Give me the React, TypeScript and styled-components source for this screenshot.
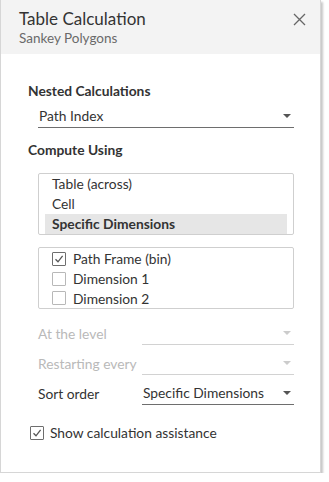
import React from "react";
import styled, { createGlobalStyle } from "styled-components";

const GlobalStyle = createGlobalStyle`
  html, body {
    margin: 0;
    padding: 0;
    background: #ffffff;
  }
  body {
    font-family: Lato, "Open Sans", "Liberation Sans", sans-serif;
    color: #333333;
  }
`;

const Panel = styled.div`
  width: 321px;
  height: 473px;
  box-sizing: border-box;
  background: #ffffff;
  border: 1px solid #d6d6d6;
  border-top: none;
  box-shadow: 2px 2px 2px rgba(0, 0, 0, 0.22);
  display: flex;
  flex-direction: column;
`;

const Header = styled.div`
  height: 54px;
  box-sizing: border-box;
  background: #f3f3f3;
  padding: 8px 14px 0 18px;
  display: flex;
  justify-content: space-between;
  align-items: flex-start;
`;

const Title = styled.div`
  font-size: 17px;
  line-height: 22px;
  color: #333333;
`;

const Subtitle = styled.div`
  font-size: 13.5px;
  line-height: 16px;
  color: #6a6a6a;
`;

const CloseButton = styled.button`
  border: none;
  background: none;
  padding: 0;
  margin-top: 5px;
  width: 14px;
  height: 14px;
  cursor: pointer;
  color: #666666;
`;

const Body = styled.div`
  padding: 28px 26px 0 27px;
  display: flex;
  flex-direction: column;
`;

const SectionTitle = styled.div`
  font-size: 13.8px;
  font-weight: bold;
  line-height: 18px;
  color: #333333;
`;

const Indented = styled.div`
  margin-left: 10px;
`;

const SelectBox = styled.div<{ $disabled?: boolean }>`
  position: relative;
  height: 23px;
  border-bottom: 1px solid ${(p) => (p.$disabled ? "#d2d2d2" : "#6e6e6e")};
  display: flex;
  align-items: center;
  padding-left: 1px;
  font-size: 13.8px;
  color: #333333;
  &::after {
    content: "";
    position: absolute;
    right: 3px;
    top: 10px;
    border-left: 4px solid transparent;
    border-right: 4px solid transparent;
    border-top: 4px solid ${(p) => (p.$disabled ? "#cccccc" : "#555555")};
  }
`;

const ListBox = styled.div<{ $inset?: boolean }>`
  height: 62px;
  box-sizing: border-box;
  border: 1px solid #cfcfcf;
  border-radius: 2px;
  padding: ${(p) => (p.$inset ? "0 6px 0 6px" : "1px 0 0 0")};
  display: flex;
  flex-direction: column;
`;

const ListItem = styled.div<{ $selected?: boolean }>`
  height: 20px;
  line-height: 20px;
  font-size: 13.8px;
  padding-left: 7px;
  font-weight: ${(p) => (p.$selected ? "bold" : "normal")};
  background: ${(p) => (p.$selected ? "#e6e6e6" : "transparent")};
  color: #333333;
`;

const CheckRow = styled.div`
  height: 20px;
  display: flex;
  align-items: center;
  gap: 7px;
  font-size: 13.8px;
  color: #333333;
  padding-left: 13px;
`;

const Box = styled.span`
  width: 14px;
  height: 14px;
  box-sizing: border-box;
  border: 1px solid #b8b8b8;
  border-radius: 1px;
  display: inline-flex;
  align-items: center;
  justify-content: center;
  background: #ffffff;
`;

const CheckedBox = styled(Box)`
  border-color: #6e6e6e;
`;

const FieldRow = styled.div<{ $disabled?: boolean }>`
  display: grid;
  grid-template-columns: 104px 1fr;
  align-items: end;
  height: 30px;
  font-size: 13.8px;
  color: ${(p) => (p.$disabled ? "#b9b9b9" : "#333333")};
`;

const FieldLabel = styled.div`
  height: 23px;
  line-height: 23px;
`;

const Assist = styled.div`
  display: flex;
  align-items: center;
  gap: 6px;
  font-size: 13.8px;
  color: #333333;
  margin-top: 19px;
  margin-left: 2px;
`;

const Tick = () => (
  <svg width="10" height="10" viewBox="0 0 10 10">
    <path d="M1.5 5.2 L4 7.8 L8.6 1.8" fill="none" stroke="#555" strokeWidth="1.3" />
  </svg>
);

const App: React.FC = () => {
  const dims = [
    { name: "Path Frame (bin)", checked: true },
    { name: "Dimension 1", checked: false },
    { name: "Dimension 2", checked: false },
  ];

  return (
    <>
      <GlobalStyle />
      <Panel>
        <Header>
          <div>
            <Title>Table Calculation</Title>
            <Subtitle>Sankey Polygons</Subtitle>
          </div>
          <CloseButton aria-label="Close">
            <svg width="13" height="13" viewBox="0 0 13 13">
              <path d="M1 1 L12 12 M12 1 L1 12" stroke="#666" strokeWidth="1.3" />
            </svg>
          </CloseButton>
        </Header>
        <Body>
          <SectionTitle>Nested Calculations</SectionTitle>
          <Indented style={{ marginTop: 4 }}>
            <SelectBox>Path Index</SelectBox>
          </Indented>
          <SectionTitle style={{ marginTop: 13 }}>Compute Using</SectionTitle>
          <Indented style={{ marginTop: 14 }}>
            <ListBox $inset>
              <ListItem>Table (across)</ListItem>
              <ListItem>Cell</ListItem>
              <ListItem $selected>Specific Dimensions</ListItem>
            </ListBox>
          </Indented>
          <Indented style={{ marginTop: 12 }}>
            <ListBox>
              {dims.map((d) => (
                <CheckRow key={d.name}>
                  {d.checked ? (
                    <CheckedBox>
                      <Tick />
                    </CheckedBox>
                  ) : (
                    <Box />
                  )}
                  {d.name}
                </CheckRow>
              ))}
            </ListBox>
          </Indented>
          <Indented style={{ marginTop: 6 }}>
            <FieldRow $disabled>
              <FieldLabel>At the level</FieldLabel>
              <SelectBox $disabled />
            </FieldRow>
            <FieldRow $disabled>
              <FieldLabel>Restarting every</FieldLabel>
              <SelectBox $disabled />
            </FieldRow>
            <FieldRow>
              <FieldLabel>Sort order</FieldLabel>
              <SelectBox>Specific Dimensions</SelectBox>
            </FieldRow>
          </Indented>
          <Assist>
            <CheckedBox>
              <Tick />
            </CheckedBox>
            Show calculation assistance
          </Assist>
        </Body>
      </Panel>
    </>
  );
};

export default App;
